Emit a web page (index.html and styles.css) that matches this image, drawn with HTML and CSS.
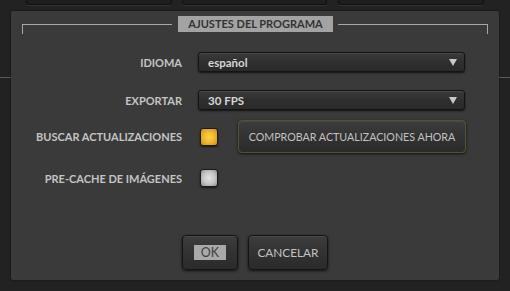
FILE: index.html
```html
<!DOCTYPE html>
<html lang="es">
<head>
<meta charset="utf-8">
<title>Ajustes del programa</title>
<link rel="stylesheet" href="styles.css">
</head>
<body>
<div class="tabs">
  <div class="tab t1"></div>
  <div class="tab t2"></div>
  <div class="tab t3"></div>
</div>
<div class="dialog">
  <div class="group-head">
    <div class="rule rule-left"></div>
    <div class="group-title">AJUSTES DEL PROGRAMA</div>
    <div class="rule rule-right"></div>
  </div>
  <div class="form">
    <div class="row row-lang">
      <div class="label">IDIOMA</div>
      <div class="select"><span class="value">español</span><svg class="arrow" width="8" height="7" viewBox="0 0 8 7"><path d="M0 0H8L4 7Z" fill="#c9c9c9"/></svg></div>
    </div>
    <div class="row row-export">
      <div class="label">EXPORTAR</div>
      <div class="select"><span class="value">30 FPS</span><svg class="arrow" width="8" height="7" viewBox="0 0 8 7"><path d="M0 0H8L4 7Z" fill="#c9c9c9"/></svg></div>
    </div>
    <div class="row row-updates">
      <div class="label">BUSCAR ACTUALIZACIONES</div>
      <div class="controls">
        <div class="check check-on"></div>
        <div class="btn btn-check">COMPROBAR ACTUALIZACIONES AHORA</div>
      </div>
    </div>
    <div class="row row-cache">
      <div class="label">PRE-CACHE DE IMÁGENES</div>
      <div class="controls">
        <div class="check check-off"></div>
      </div>
    </div>
  </div>
  <div class="footer">
    <div class="btn btn-ok"><span class="ok-text">OK</span></div>
    <div class="btn btn-cancel">CANCELAR</div>
  </div>
</div>
</body>
</html>
```
FILE: styles.css
```css
html, body {
  margin: 0;
  padding: 0;
}
body {
  width: 510px;
  height: 291px;
  overflow: hidden;
  background-color: #222;
  background-image: linear-gradient(to bottom, transparent 77px, #5a5a5a 77px, #5a5a5a 78px, transparent 78px);
  font-family: Lato, "Open Sans", "Liberation Sans", sans-serif;
}
.tabs {
  display: flex;
  height: 5px;
  padding-left: 26px;
}
.tab {
  height: 4px;
  background: #1e1e1e;
  border: 1px solid #0e0e0e;
  border-top: none;
  border-radius: 0 0 3px 3px;
  box-shadow: 0 1px 0 #333;
}
.t1 { width: 144px; }
.t2 { width: 143px; margin-left: 10px; }
.t3 { width: 144px; margin-left: 11px; }

.dialog {
  margin: 6px 0 0 11px;
  width: 488px;
  height: 269px;
  background: #3a3a3a;
  border-radius: 2px;
  box-shadow: 0 0 2px rgba(0,0,0,0.6);
  display: flex;
  flex-direction: column;
}
.group-head {
  display: flex;
  padding: 5px 11px 0 11px;
  height: 16px;
}
.rule {
  flex: 1;
  margin-top: 8px;
  height: 9px;
  border-top: 1px solid #a8a8a8;
}
.rule-left { border-left: 1px solid #a8a8a8; margin-right: 6px; }
.rule-right { border-right: 1px solid #a8a8a8; margin-left: 5px; }
.group-title {
  width: 155px;
  height: 16px;
  background: #a3a3a3;
  color: #333;
  font-size: 11px;
  font-weight: bold;
  line-height: 16px;
  text-align: center;
}

.form {
  display: flex;
  flex-direction: column;
}
.row {
  display: grid;
  grid-template-columns: 171px 1fr;
  column-gap: 16px;
  align-items: center;
}
.row-lang { margin-top: 20px; height: 20px; }
.row-export { margin-top: 18px; height: 20px; }
.row-updates { margin-top: 10px; height: 33px; }
.row-cache { margin-top: 15px; height: 20px; }

.label {
  text-align: right;
  color: #c4c4c4;
  font-size: 11px;
  font-weight: bold;
  white-space: nowrap;
}
.select {
  width: 265px;
  height: 18px;
  border: 1px solid #141414;
  border-radius: 3px;
  background: linear-gradient(to bottom, #3a3a3a 0%, #2f2f2f 50%, #2a2a2a 100%);
  box-shadow: inset 0 1px 0 #474747, 0 1px 2px rgba(0,0,0,0.7);
  display: flex;
  align-items: center;
  justify-content: space-between;
}
.value {
  margin-left: 9px;
  color: #d6d6d6;
  font-size: 11.5px;
  font-weight: bold;
}
.arrow {
  display: block;
  margin-right: 7px;
}
.controls {
  display: flex;
  align-items: center;
}
.check {
  width: 16px;
  height: 16px;
  margin-left: 2px;
  border: 1px solid #1a1a1a;
  border-radius: 3px;
  box-shadow: 0 1px 2px rgba(0,0,0,0.6);
}
.check-on {
  background: radial-gradient(circle at 50% 50%, #fcd24a 0%, #f0b82c 50%, #d08a0c 100%);
}
.check-off {
  background: radial-gradient(circle at 50% 50%, #e2e2e2 0%, #c4c4c4 55%, #8e8e8e 100%);
}
.btn {
  box-sizing: border-box;
  display: flex;
  align-items: center;
  justify-content: center;
  border: 1px solid #141414;
  border-radius: 4px;
  background: linear-gradient(to bottom, #3d3d3d 0%, #323232 50%, #2b2b2b 100%);
  box-shadow: inset 0 1px 0 #4a4a4a, 0 1px 3px rgba(0,0,0,0.7);
  color: #c2c2c2;
  font-size: 11px;
  white-space: nowrap;
}
.btn-check {
  margin-left: 20px;
  width: 228px;
  height: 33px;
  font-size: 10.7px;
  border-color: #55522f;
  box-shadow: inset 0 1px 0 #484840, 0 1px 3px rgba(0,0,0,0.7);
}
.footer {
  margin-top: auto;
  padding-bottom: 10px;
  display: flex;
  justify-content: center;
  gap: 10px;
}
.btn-ok { width: 56px; height: 35px; }
.btn-cancel { width: 80px; height: 35px; font-size: 11.8px; }
.ok-text {
  background: #a9a9a9;
  color: #3e3e3e;
  width: 32px;
  height: 15px;
  line-height: 15px;
  text-align: center;
  font-size: 12.5px;
}
```
